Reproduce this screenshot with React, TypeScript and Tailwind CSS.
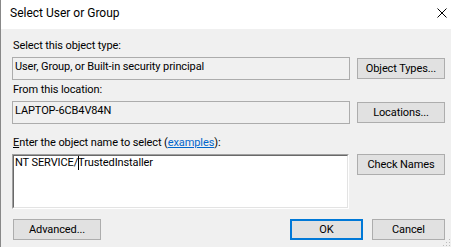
import React from 'react';

const font = { fontFamily: 'Roboto, "Noto Sans", Arial, sans-serif' };

function WinButton({ children, className = '', primary = false }: { children: React.ReactNode; className?: string; primary?: boolean }) {
  return (
    <div
      className={`flex items-center justify-center bg-[#e1e1e1] text-[11px] leading-[16px] text-black ${
        primary ? 'border-2 border-[#0078d7]' : 'border border-[#adadad]'
      } ${className}`}
    >
      {children}
    </div>
  );
}

export default function App() {
  return (
    <div
      className="relative w-[451px] h-[247px] overflow-hidden bg-[#f0f0f0] border-l border-[#888888] flex flex-col text-black"
      style={font}
    >
      {/* Title bar */}
      <div className="h-[29px] bg-white flex items-start justify-between pl-[9px] pr-[4px]">
        <span className="pt-[5px] text-[12px] leading-[16px]">Select User or Group</span>
        <svg width="10" height="10" viewBox="0 0 10 10" className="mt-[8px]">
          <path d="M0.5 0.5 L9.5 9.5 M9.5 0.5 L0.5 9.5" stroke="#000" strokeWidth="1" fill="none" />
        </svg>
      </div>

      <div className="flex flex-col pl-[11px] pr-[6px] text-[11px] leading-[16px] tracking-[-0.1px]">
        {/* Object type */}
        <div className="mt-[9px] h-[16px] pl-px">Select this object type:</div>
        <div className="mt-[3px] flex items-start gap-[7px]">
          <div className="w-[338px] h-[23px] border border-[#acacac] pt-[1px] pl-[2px]">
            User, Group, or Built-in security principal
          </div>
          <WinButton className="mt-px w-[88px] h-[21px]">Object Types...</WinButton>
        </div>

        {/* Location */}
        <div className="mt-[2px] h-[16px] pl-px">From this location:</div>
        <div className="mt-[3px] flex items-start gap-[7px]">
          <div className="w-[338px] h-[23px] border border-[#acacac] pt-[1px] pl-[2px]">
            LAPTOP-6CB4V84N
          </div>
          <WinButton className="mt-px w-[88px] h-[21px]">Locations...</WinButton>
        </div>

        {/* Object name */}
        <div className="mt-[11px] h-[16px] pl-px">
          <span className="underline">E</span>nter the object name to select (
          <span className="text-[#0066cc] underline">examples</span>):
        </div>
        <div className="mt-[3px] flex items-start gap-[8px]">
          <div className="w-[337px] h-[55px] border-t border-l border-[#a0a0a0] border-b-white border-r-white border-b border-r">
            <div className="h-full border-t border-l border-[#696969] border-b border-r border-b-[#e3e3e3] border-r-[#e3e3e3] bg-white pl-[1px] leading-[14px]">
              NT SERVICE/
              <span className="inline-block w-px h-[14px] bg-black align-top -mr-px" />
              TrustedInstaller
            </div>
          </div>
          <WinButton className="w-[88px] h-[21px]">Check Names</WinButton>
        </div>

        {/* Bottom buttons */}
        <div className="mt-[10px] flex items-start">
          <WinButton className="ml-px w-[88px] h-[21px]">Advanced...</WinButton>
          <div className="flex-1" />
          <WinButton primary className="w-[73px] h-[21px]">OK</WinButton>
          <WinButton className="ml-[9px] w-[73px] h-[21px]">Cancel</WinButton>
        </div>
      </div>

      {/* Size grip */}
      <svg width="8" height="8" viewBox="0 0 8 8" className="absolute right-0 bottom-0">
        <rect x="6" y="0" width="1" height="1" fill="#bcbcbc" />
        <rect x="6" y="3" width="1" height="1" fill="#bcbcbc" />
        <rect x="3" y="3" width="1" height="1" fill="#bcbcbc" />
        <rect x="6" y="6" width="1" height="1" fill="#bcbcbc" />
        <rect x="3" y="6" width="1" height="1" fill="#bcbcbc" />
        <rect x="0" y="6" width="1" height="1" fill="#bcbcbc" />
      </svg>
    </div>
  );
}
